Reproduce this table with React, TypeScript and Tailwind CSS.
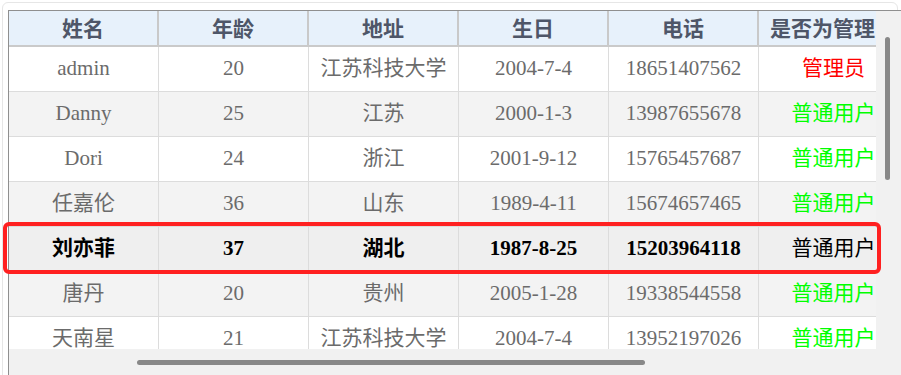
type Row = {
  name: string;
  age: number;
  addr: string;
  birth: string;
  phone: string;
  admin: boolean;
};

const rows: Row[] = [
  { name: 'admin', age: 20, addr: '江苏科技大学', birth: '2004-7-4', phone: '18651407562', admin: true },
  { name: 'Danny', age: 25, addr: '江苏', birth: '2000-1-3', phone: '13987655678', admin: false },
  { name: 'Dori', age: 24, addr: '浙江', birth: '2001-9-12', phone: '15765457687', admin: false },
  { name: '任嘉伦', age: 36, addr: '山东', birth: '1989-4-11', phone: '15674657465', admin: false },
  { name: '刘亦菲', age: 37, addr: '湖北', birth: '1987-8-25', phone: '15203964118', admin: false },
  { name: '唐丹', age: 20, addr: '贵州', birth: '2005-1-28', phone: '19338544558', admin: false },
  { name: '天南星', age: 21, addr: '江苏科技大学', birth: '2004-7-4', phone: '13952197026', admin: false },
];

const heads = ['姓名', '年龄', '地址', '生日', '电话', '是否为管理员'];
const selected = 4;

function Cell({ children, className = '' }: { children: React.ReactNode; className?: string }) {
  return (
    <div className={`flex h-full w-[150px] shrink-0 items-center justify-center whitespace-nowrap border-r border-[#dcdcdc] ${className}`}>
      {children}
    </div>
  );
}

export default function App() {
  return (
    <div className="relative h-[375px] w-[901px] overflow-hidden bg-white">
      <div className="ml-[2px] mt-[2px] h-[400px] w-[896px] rounded-[6px] border border-[#e6e6e6] pl-[5px] pt-[7px]">
        <div className="flex w-[893px] flex-col border-l border-t border-[#8f8f8f]">
          <div className="flex h-[338px]">
            <div className="w-[868px] overflow-hidden">
              <div className="flex h-[36px] w-[900px] border-b-2 border-[#cacaca] bg-[#e7f1fb] font-['Noto_Sans_CJK_SC',sans-serif] text-[21px] font-bold text-[#4e5668]">
                {heads.map((h) => (
                  <div key={h} className="flex h-full w-[150px] shrink-0 items-center justify-center whitespace-nowrap border-r-2 border-[#c9c9c9]">
                    {h}
                  </div>
                ))}
              </div>
              {rows.map((r, i) => {
                const sel = i === selected;
                const bg = sel ? 'bg-[#efefef]' : i % 2 === 1 ? 'bg-[#f3f3f3]' : 'bg-white';
                const txt = sel ? 'text-black font-bold' : 'text-[#6b6b6b]';
                const roleColor = sel ? 'text-black' : r.admin ? 'text-[#ff0000]' : 'text-[#00ff00]';
                return (
                  <div
                    key={r.phone + i}
                    className={`flex h-[45px] w-[900px] border-b border-[#dcdcdc] font-['Liberation_Serif','Noto_Sans_CJK_SC',serif] text-[21px] ${bg} ${txt}`}
                  >
                    <Cell>{r.name}</Cell>
                    <Cell>{r.age}</Cell>
                    <Cell>{r.addr}</Cell>
                    <Cell>{r.birth}</Cell>
                    <Cell>{r.phone}</Cell>
                    <Cell className={`font-normal ${roleColor}`}>{r.admin ? '管理员' : '普通用户'}</Cell>
                  </div>
                );
              })}
            </div>
            <div className="w-[25px] bg-[#f1f1f1] pl-[9px] pt-[26px]">
              <div className="h-[143px] w-[5px] rounded-full bg-[#888888]" />
            </div>
          </div>
          <div className="h-[26px] bg-[#f1f1f1] pl-[128px] pt-[11px]">
            <div className="h-[5px] w-[508px] rounded-full bg-[#888888]" />
          </div>
        </div>
      </div>
      <div className="absolute left-[3px] top-[222px] h-[52px] w-[878px] rounded-[6px] border-4 border-[#ff2020]" />
    </div>
  );
}
